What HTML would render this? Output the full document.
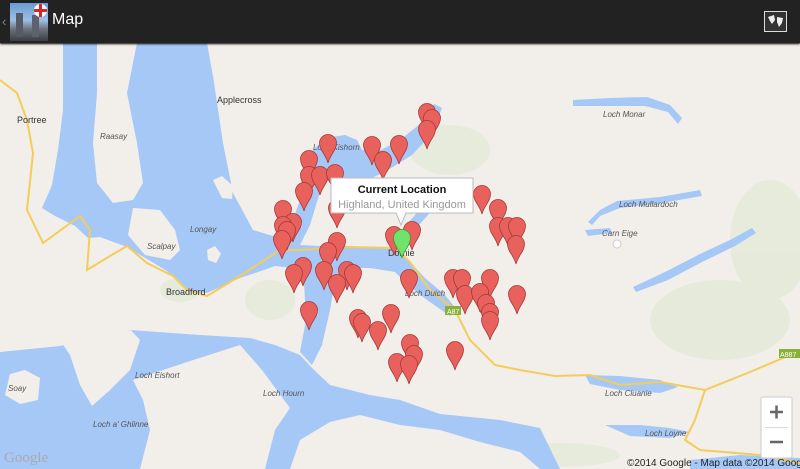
<!DOCTYPE html>
<html><head><meta charset="utf-8"><style>
html,body{margin:0;padding:0;width:800px;height:469px;overflow:hidden;font-family:"Liberation Sans",sans-serif}
#bar{position:absolute;left:0;top:0;width:800px;height:43px;background:#222;box-shadow:0 1px 2px #000;z-index:5}
#map{position:absolute;left:0;top:43px}
.lbl{font-family:"Liberation Sans",sans-serif;font-size:8px;fill:#555;font-style:italic}
.tw{font-family:"Liberation Sans",sans-serif;font-size:9px;fill:#333}
</style></head><body>
<div id="bar">
 <div style="position:absolute;left:2px;top:14px;color:#888;font-size:13px">‹</div>
 <div style="position:absolute;left:10px;top:3px;width:38px;height:38px;background:linear-gradient(#6a9ad0 0%,#9cc0e8 45%,#6b6f78 70%,#3a3d44 100%)">
  <div style="position:absolute;left:6px;top:10px;width:7px;height:24px;background:#555a64"></div>
  <div style="position:absolute;left:22px;top:12px;width:7px;height:22px;background:#5d626c"></div>
  <div style="position:absolute;left:24px;top:1px;width:13px;height:13px;border-radius:50%;background:#fff;overflow:hidden">
   <div style="position:absolute;left:5px;top:0;width:3px;height:13px;background:#d22"></div>
   <div style="position:absolute;left:0;top:5px;width:13px;height:3px;background:#d22"></div>
  </div>
 </div>
 <div style="position:absolute;left:52px;top:11px;color:#fff;font-size:16px">Map</div>
 <div style="position:absolute;left:764px;top:11px;width:21px;height:19px;border:1px solid #ddd;background:#333">
  <svg width="21" height="19"><path d="M3 5 L9 3 L10 8 L7 12 L5 9Z M12 5 L18 6 L17 11 L14 15 L12 10Z" fill="#eee"/></svg>
 </div>
</div>
<svg id="map" width="800" height="426" viewBox="0 43 800 426">
 <rect x="0" y="43" width="800" height="426" fill="#f2eeea"/>
 <g fill="#e2e9d6" opacity="0.7">
  <ellipse cx="450" cy="150" rx="40" ry="25"/><ellipse cx="720" cy="320" rx="70" ry="40"/>
  <ellipse cx="180" cy="290" rx="20" ry="12"/><ellipse cx="560" cy="455" rx="60" ry="12"/>
  <ellipse cx="770" cy="240" rx="40" ry="60"/><ellipse cx="270" cy="300" rx="25" ry="20"/>
 </g>
 <g fill="#a6c8f7">
  <path d="M63 43 L207 43 L213 76 L223 143 L233 193 L253 230 L273 236 L290 228 L300 200 L305 175 L313 150 L325 138 L345 135 L357 140 L362 150 L375 153 L400 140 L420 124 L434 104 L442 108 L432 134 L412 155 L388 170 L368 180 L348 181 L332 176 L322 186 L316 205 L310 225 L300 245 L320 246 L350 246 L380 248 L396 250 L410 262 L425 278 L445 295 L457 310 L450 316 L430 302 L410 287 L395 272 L370 268 L345 268 L335 280 L330 310 L322 345 L312 365 L300 352 L306 320 L304 282 L292 268 L275 266 L258 272 L240 278 L207 293 L187 291 L167 271 L127 247 L100 237 L88 238 L75 226 L55 216 L42 208 L52 185 L58 150 L63 110Z"/>
  <path d="M404 228 L415 215 L428 200 L445 185 L450 190 L435 207 L420 224 L410 232Z"/>
  <path d="M0 352 L60 346 L130 330 L200 335 L250 338 L275 345 L300 355 L312 368 L330 385 L370 395 L400 400 L440 414 L500 420 L540 428 L560 469 L0 469Z"/>
  <path d="M573 100 L610 98 L647 97 L670 105 L682 118 L678 124 L668 112 L645 106 L610 106 L573 106Z"/>
  <path d="M588 222 L600 210 L617 201 L660 197 L700 190 L702 196 L662 203 L620 208 L600 216 L592 225Z"/>
  <path d="M633 287 L665 272 L700 254 L730 240 L752 228 L756 233 L735 246 L702 262 L668 280 L636 292Z"/>
  <path d="M585 375 L620 376 L660 380 L678 387 L660 393 L620 390 L590 384Z"/>
  <path d="M605 425 L640 425 L670 428 L690 432 L670 438 L630 436Z"/>
  <path d="M690 460 L740 455 L800 458 L800 469 L690 469Z"/>
  <path d="M585 230 L610 228 L612 233 L588 236Z"/>
 </g>
 <g fill="#f2eeea">
  <path d="M97 43 L137 43 L127 93 L137 143 L143 183 L133 200 L113 203 L97 183 L93 143 L97 93Z"/>
  <path d="M133 208 L160 210 L175 230 L180 250 L170 260 L145 255 L128 235Z"/>
  <path d="M207 250 L215 246 L221 254 L216 263 L208 260Z"/>
  <path d="M213 180 L222 176 L233 186 L232 199 L222 198Z"/>
  <path d="M10 374 L25 370 L40 378 L38 400 L20 404 L5 395Z"/>
  <path d="M60 340 L77 316 L127 326 L140 340 L130 370 L110 390 L92 406 L80 385 L70 355Z"/>
  <path d="M133 380 L187 362 L240 345 L262 370 L290 408 L275 430 L265 469 L140 469 L150 430 L143 400Z"/>
  <path d="M290 469 L300 440 L330 422 L360 415 L400 425 L440 430 L480 442 L520 452 L540 469Z"/>
 </g>
 <g fill="none" stroke="#f4cc5c" stroke-width="2">
  <path d="M0 80 L17 93 L27 120 L33 153 L27 210 L43 243 L80 216 L90 230 L87 270 L110 256 L127 246 L147 263 L173 276 L187 290 L207 296 L240 276 L280 250 L300 250 L350 247 L395 248 L410 262 L430 290 L455 310 L470 340 L495 365 L520 370 L555 376 L590 375 L620 385 L660 382 L705 390 L750 372 L790 355 L800 350"/>
  <path d="M705 390 L695 420 L685 440 L700 450 L760 455 L800 463"/>
 </g>
 <text class="tw" x="217" y="103">Applecross</text>
 <text class="tw" x="17" y="123">Portree</text>
 <text class="lbl" x="100" y="139">Raasay</text>
 <text class="lbl" x="190" y="232">Longay</text>
 <text class="lbl" x="147" y="249">Scalpay</text>
 <text class="tw" x="166" y="295">Broadford</text>
 <text class="lbl" x="313" y="150">Loch Kishorn</text>
 <text class="lbl" x="603" y="117">Loch Monar</text>
 <text class="lbl" x="619" y="207">Loch Mullardoch</text>
 <text class="lbl" x="602" y="236">Carn Eige</text>
 <circle cx="617" cy="244" r="4" fill="#fff" stroke="#ccc"/>
 <text class="lbl" x="135" y="378">Loch Eishort</text>
 <text class="lbl" x="8" y="391">Soay</text>
 <text class="lbl" x="263" y="396">Loch Hourn</text>
 <text class="lbl" x="93" y="427">Loch a' Ghlinne</text>
 <text class="lbl" x="405" y="296">Loch Duich</text>
 <text class="lbl" x="605" y="396">Loch Cluanie</text>
 <text class="lbl" x="645" y="436">Loch Loyne</text>
 <text class="tw" x="388" y="256">Dornie</text>
 <rect x="445" y="306" width="16" height="9" fill="#8bb03a"/><text x="447" y="314" font-size="7" fill="#fff" font-family="Liberation Sans">A87</text>
 <rect x="779" y="349" width="21" height="9" fill="#8bb03a"/><text x="780" y="357" font-size="7" fill="#fff" font-family="Liberation Sans">A887</text>
 <text x="4" y="462" font-size="15" fill="#aaa" font-family="Liberation Serif">Google</text>
 <defs>
  <path id="pin" d="M0 20 C-2 12 -8.5 7 -8.5 0 A8.5 8.5 0 1 1 8.5 0 C8.5 7 2 12 0 20Z"/>
 </defs>
 <g fill="#e8615d" stroke="#a33a36" stroke-width="0.8">
  <use href="#pin" x="427" y="112"/><use href="#pin" x="432" y="118"/><use href="#pin" x="427" y="129"/>
  <use href="#pin" x="328" y="143"/><use href="#pin" x="372" y="145"/><use href="#pin" x="399" y="144"/>
  <use href="#pin" x="383" y="160"/><use href="#pin" x="309" y="159"/><use href="#pin" x="309" y="175"/>
  <use href="#pin" x="320" y="175"/><use href="#pin" x="335" y="173"/><use href="#pin" x="304" y="191"/>
  <use href="#pin" x="283" y="209"/><use href="#pin" x="293" y="222"/><use href="#pin" x="283" y="225"/>
  <use href="#pin" x="287" y="230"/><use href="#pin" x="282" y="239"/><use href="#pin" x="337" y="208"/>
  <use href="#pin" x="337" y="241"/><use href="#pin" x="328" y="251"/><use href="#pin" x="303" y="266"/>
  <use href="#pin" x="294" y="273"/><use href="#pin" x="324" y="270"/><use href="#pin" x="347" y="270"/>
  <use href="#pin" x="353" y="273"/><use href="#pin" x="337" y="283"/><use href="#pin" x="409" y="278"/>
  <use href="#pin" x="309" y="310"/><use href="#pin" x="358" y="318"/><use href="#pin" x="362" y="322"/>
  <use href="#pin" x="378" y="330"/><use href="#pin" x="391" y="313"/><use href="#pin" x="410" y="343"/>
  <use href="#pin" x="414" y="354"/><use href="#pin" x="397" y="362"/><use href="#pin" x="409" y="364"/>
  <use href="#pin" x="455" y="350"/><use href="#pin" x="453" y="278"/><use href="#pin" x="462" y="278"/>
  <use href="#pin" x="490" y="278"/><use href="#pin" x="465" y="294"/><use href="#pin" x="480" y="292"/>
  <use href="#pin" x="486" y="303"/><use href="#pin" x="490" y="312"/><use href="#pin" x="490" y="320"/>
  <use href="#pin" x="517" y="294"/><use href="#pin" x="482" y="194"/><use href="#pin" x="498" y="208"/>
  <use href="#pin" x="498" y="226"/><use href="#pin" x="508" y="226"/><use href="#pin" x="517" y="226"/>
  <use href="#pin" x="516" y="244"/><use href="#pin" x="394" y="235"/><use href="#pin" x="412" y="230"/>
 </g>
 <use href="#pin" x="402" y="238" fill="#72e36a" stroke="#3a9a34" stroke-width="0.8"/>
 <path d="M331 178 H473 V213 H406 L401 225 L396 213 H331Z" fill="#fff" stroke="#bbb"/>
 <text x="402" y="193" text-anchor="middle" font-size="11" font-weight="bold" fill="#111" font-family="Liberation Sans">Current Location</text>
 <text x="402" y="208" text-anchor="middle" font-size="11" fill="#999" font-family="Liberation Sans">Highland, United Kingdom</text>
 <rect x="761" y="397" width="31" height="61" rx="2" fill="#fff" stroke="#ccc"/>
 <line x1="765" y1="427.5" x2="788" y2="427.5" stroke="#ddd"/>
 <path d="M770 412 H783 M776.5 405.5 V418.5 M770 442 H783" stroke="#666" stroke-width="2.5"/>
 <text x="627" y="466" font-size="10" fill="#222" font-family="Liberation Sans">©2014 Google - Map data ©2014 Google</text>
</svg>
</body></html>
